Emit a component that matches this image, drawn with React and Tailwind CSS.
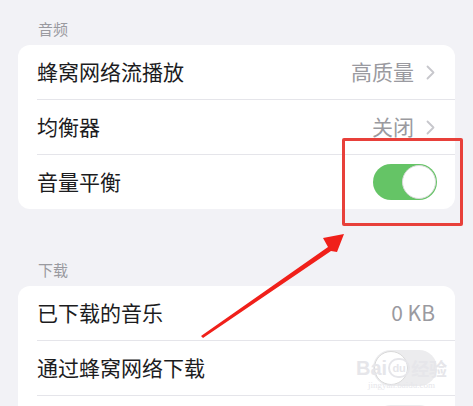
import React from 'react';

const Chevron = () => (
  <svg width="9" height="15" viewBox="0 0 9 15" className="ml-[12px]">
    <path d="M1.5 1.5 L7.5 7.5 L1.5 13.5" fill="none" stroke="#c7c7cc" strokeWidth="1.8" strokeLinecap="round" strokeLinejoin="round" />
  </svg>
);

const Toggle = ({ on }) => (
  <div className={`w-[64px] h-[36px] rounded-full relative ${on ? 'bg-[#65c466]' : 'bg-[#ececee]'}`}>
    <div
      className={`absolute top-[1px] w-[34px] h-[34px] rounded-full bg-white border border-[#d9d9d9] ${on ? 'right-[1px]' : 'left-[1px]'}`}
    />
  </div>
);

const Row = ({ label, value, chevron, toggle, last }) => (
  <div>
    <div className="h-[54px] flex items-center pl-[19px] pr-[20px]">
      <span className="flex-1 text-[21px] text-[#1c1c1e]">{label}</span>
      {value && <span className="text-[21px] text-[#9a9aa0]">{value}</span>}
      {chevron && <Chevron />}
      {toggle !== undefined && <div className="mr-[-2px]"><Toggle on={toggle} /></div>}
    </div>
    {!last && <div className="ml-[19px] h-px bg-[#e5e5ea]" />}
  </div>
);

const Section = ({ title, children, className = '' }) => (
  <div className={className}>
    <div className="pl-[20px] text-[15px] leading-[22px] text-[#9a9aa0] mb-[5px]">{title}</div>
    <div className="bg-white rounded-[12px] overflow-hidden">{children}</div>
  </div>
);

export default function App() {
  return (
    <div
      className="w-[473px] h-[406px] overflow-hidden bg-[#f2f2f6] relative"
      style={{ fontFamily: '"Noto Sans CJK SC", "Noto Sans", sans-serif' }}
    >
      <div className="pl-[18px] pr-[18px] pt-[18px]">
        <Section title="音频">
          <Row label="蜂窝网络流播放" value="高质量" chevron />
          <Row label="均衡器" value="关闭" chevron />
          <Row label="音量平衡" toggle={true} last />
        </Section>
        <Section title="下载" className="mt-[50px]">
          <Row label="已下载的音乐" value="0 KB" />
          <Row label="通过蜂窝网络下载" toggle={false} />
          <Row label="" toggle={false} last />
        </Section>
      </div>

      {/* red highlight box */}
      <div className="absolute left-[342px] top-[138px] w-[121px] h-[88px] border-[3px] border-[#e8403a] rounded-[2px]" />

      {/* red arrow */}
      <svg className="absolute left-0 top-0" width="473" height="406" viewBox="0 0 473 406">
        <polygon points="201,336 328,247 323,238 344,234 337,252 331,251 203,338" fill="#f0201a" />
      </svg>

      {/* watermark */}
      <div className="absolute left-[356px] top-[358px] flex flex-col items-center leading-none">
        <div className="flex items-center text-[20px] font-bold text-[#e6e6ea]" style={{ fontFamily: '"Liberation Sans", sans-serif' }}>
          <span>Bai</span>
          <span className="mx-[1px] w-[22px] h-[20px] rounded-full border-2 border-[#e6e6ea] text-[11px] flex items-center justify-center">du</span>
          <span className="text-[18px]" style={{ fontFamily: '"Noto Sans CJK SC", sans-serif' }}>经验</span>
        </div>
        <div className="text-[9px] text-[#e6e6ea] mt-[3px]" style={{ fontFamily: '"Liberation Serif", serif' }}>jingyan.baidu.com</div>
      </div>
    </div>
  );
}
